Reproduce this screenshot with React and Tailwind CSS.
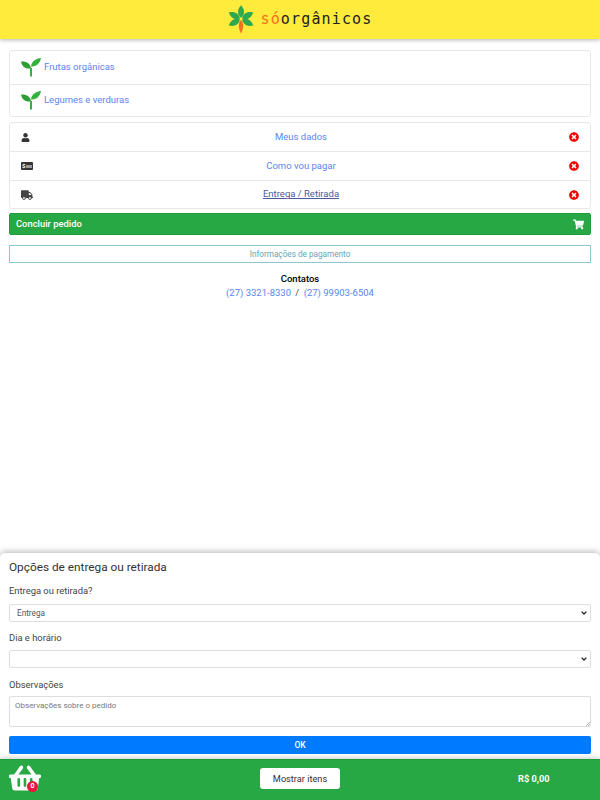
import React from "react";
import { FaUser, FaTruck, FaTimesCircle, FaShoppingCart, FaShoppingBasket } from "react-icons/fa";

const Leaf = ({ r, color }) => (
  <path d="M0 -1.2C-4 -4.5 -4 -9.5 0 -13.8C4 -9.5 4 -4.5 0 -1.2Z" fill={color} transform={`rotate(${r})`} />
);

const Logo = () => (
  <div className="flex items-center h-full">
    <svg width="28" height="29" viewBox="-14 -14 28 29" className="mr-[5px]">
      <Leaf r={0} color="#2fa84f" />
      <Leaf r={-62} color="#2fa84f" />
      <Leaf r={62} color="#2fa84f" />
      <Leaf r={-118} color="#2fa84f" />
      <Leaf r={118} color="#2fa84f" />
      <path d="M0 1C3 4 2.8 9 0 14.5C-2.8 9 -3 4 0 1Z" fill="#f37021" />
    </svg>
    <span className="font-['DejaVu_Sans_Mono',monospace] text-[15px] tracking-[1.15px] text-[#222]">
      <span className="text-[#f37021]">só</span>orgânicos
    </span>
  </div>
);

const Sprout = () => (
  <svg width="20" height="19" viewBox="0 0 20 19" className="shrink-0">
    <path d="M9 18.5V10h2v8.5Z" fill="#35b23c" />
    <path d="M0 3.5C5 3 9.5 5 10 10.5C5 11 1 9 0 3.5Z" fill="#2f9e36" />
    <path d="M20 0C15 0.5 10.5 3 10 8.5C15 8.5 19 6 20 0Z" fill="#35b23c" />
  </svg>
);

const MoneyIcon = () => (
  <div className="flex items-center gap-px w-3 h-2 bg-[#333] rounded-[1px] px-px">
    <span className="text-[6px] leading-none text-white font-bold">$</span>
    <span className="flex-1 h-[3px] bg-[#999]"></span>
  </div>
);

const SelectBox = ({ className, children }) => (
  <div className={`relative ${className}`}>
    <select className="block w-full h-[18px] appearance-none border border-[#ddd] rounded-[2px] text-[8.2px] text-[#555] pl-[7px] bg-white">
      {children}
    </select>
    <svg width="6" height="4" viewBox="0 0 6 4" className="absolute right-[4px] top-[7px] pointer-events-none">
      <path d="M0.6 0.6L3 3L5.4 0.6" fill="none" stroke="#222" strokeWidth="1.3" />
    </svg>
  </div>
);

const categories = ["Frutas orgânicas", "Legumes e verduras"];

const steps = [
  { label: "Meus dados", icon: <FaUser size={9} className="text-[#333]" />, h: "h-[28px]" },
  { label: "Como vou pagar", icon: <MoneyIcon />, h: "h-[29px]" },
  { label: "Entrega / Retirada", icon: <FaTruck size={12} className="text-[#444]" />, h: "h-[28px]", active: true },
];

const App = () => {
  return (
    <div className="flex flex-col h-[800px] w-[600px] overflow-hidden bg-white font-['Roboto',sans-serif] text-[#212529]">
      <header className="h-[39px] shrink-0 bg-[#ffeb3b] flex justify-center shadow-[0_1px_4px_rgba(0,0,0,0.3)]">
        <Logo />
      </header>

      <main className="flex-1 px-[9px] pt-[11px]">
        <ul className="border border-[#e8e8e8] rounded-[3px]">
          {categories.map((c, i) => (
            <li key={c} className={`h-[32.5px] flex items-center pl-[11px] gap-[3px] ${i > 0 ? "border-t border-[#e8e8e8]" : ""}`}>
              <Sprout />
              <a className="text-[9.5px] text-[#5c84f5]">{c}</a>
            </li>
          ))}
        </ul>

        <ul className="mt-[5px] border border-[#e8e8e8] rounded-[3px]">
          {steps.map((s, i) => (
            <li key={s.label} className={`${s.h} flex items-center px-[11px] ${i > 0 ? "border-t border-[#e8e8e8]" : ""}`}>
              <span className="w-3 flex justify-start">{s.icon}</span>
              <a className={`flex-1 text-center text-[9.5px] ${s.active ? "underline text-[#4a5a9c]" : "text-[#5c84f5]"}`}>{s.label}</a>
              <FaTimesCircle size={10} className="text-[#f00000]" />
            </li>
          ))}
        </ul>

        <button className="mt-[4px] w-full h-[22px] bg-[#28a745] border border-[#1e9e3a] rounded-[2px] flex items-center justify-between px-[6px] text-white text-[9.4px] font-medium">
          Concluir pedido
          <FaShoppingCart size={11} />
        </button>

        <button className="mt-[10px] w-full h-[18px] border border-[#8fc5d0] text-[#66a5b3] text-[8.2px] flex items-center justify-center">
          Informações de pagamento
        </button>

        <div className="mt-[9px] text-center text-[9.5px] leading-[14px]">
          <div className="text-black font-medium">Contatos</div>
          <div className="text-[#5c84f5]">
            (27) 3321-8330 <span className="text-[#444] mx-[2px]">/</span> (27) 99903-6504
          </div>
        </div>
      </main>

      <section className="h-[206px] shrink-0 rounded-t-[5px] shadow-[0_-1px_6px_rgba(0,0,0,0.3)] px-[9px] pt-[7px]">
        <h3 className="text-[11.8px] leading-[14px] text-[#333]">Opções de entrega ou retirada</h3>
        <label className="block mt-[11px] text-[9.4px] leading-[12px] text-[#444]">Entrega ou retirada?</label>
        <SelectBox className="mt-[7px]">
          <option>Entrega</option>
        </SelectBox>
        <label className="block mt-[10px] text-[9.4px] leading-[12px] text-[#444]">Dia e horário</label>
        <SelectBox className="mt-[6px]"></SelectBox>
        <label className="block mt-[11px] text-[9.4px] leading-[12px] text-[#444]">Observações</label>
        <div className="relative mt-[5px]">
          <textarea className="block w-full h-[31px] resize-none border border-[#ddd] rounded-[2px] text-[8px] px-[5px] py-[3px] placeholder:text-[#777]" placeholder="Observações sobre o pedido"></textarea>
          <svg width="4" height="4" viewBox="0 0 4 4" className="absolute right-[1px] bottom-[1px]">
            <path d="M0 4L4 0M2 4L4 2" stroke="#999" strokeWidth="0.7" />
          </svg>
        </div>
        <button className="block mt-[9px] w-full h-[18px] bg-[#007bff] rounded-[2px] text-white text-[8.5px] font-medium">OK</button>
      </section>

      <footer className="grid grid-cols-3 items-center h-[41px] shrink-0 bg-[#28a745] border-t border-[#1e9e3a] shadow-[0_-2px_4px_rgba(0,0,0,0.15)]">
        <div className="relative ml-[9px] mb-[4px] w-[32px] text-white">
          <FaShoppingBasket size={32} />
          <span className="absolute right-[3px] bottom-[2px] w-[11px] h-[11px] rounded-full bg-[#e8173d] text-[7px] text-white flex items-center justify-center font-bold">0</span>
        </div>
        <div className="flex justify-center mb-[3px]">
          <button className="w-[80px] h-[21px] bg-white rounded-[3px] text-[9.2px] text-[#333]">Mostrar itens</button>
        </div>
        <span className="pl-[118px] mb-[3px] text-white text-[9.2px] font-bold">R$ 0,00</span>
      </footer>
    </div>
  );
};

export default App;
